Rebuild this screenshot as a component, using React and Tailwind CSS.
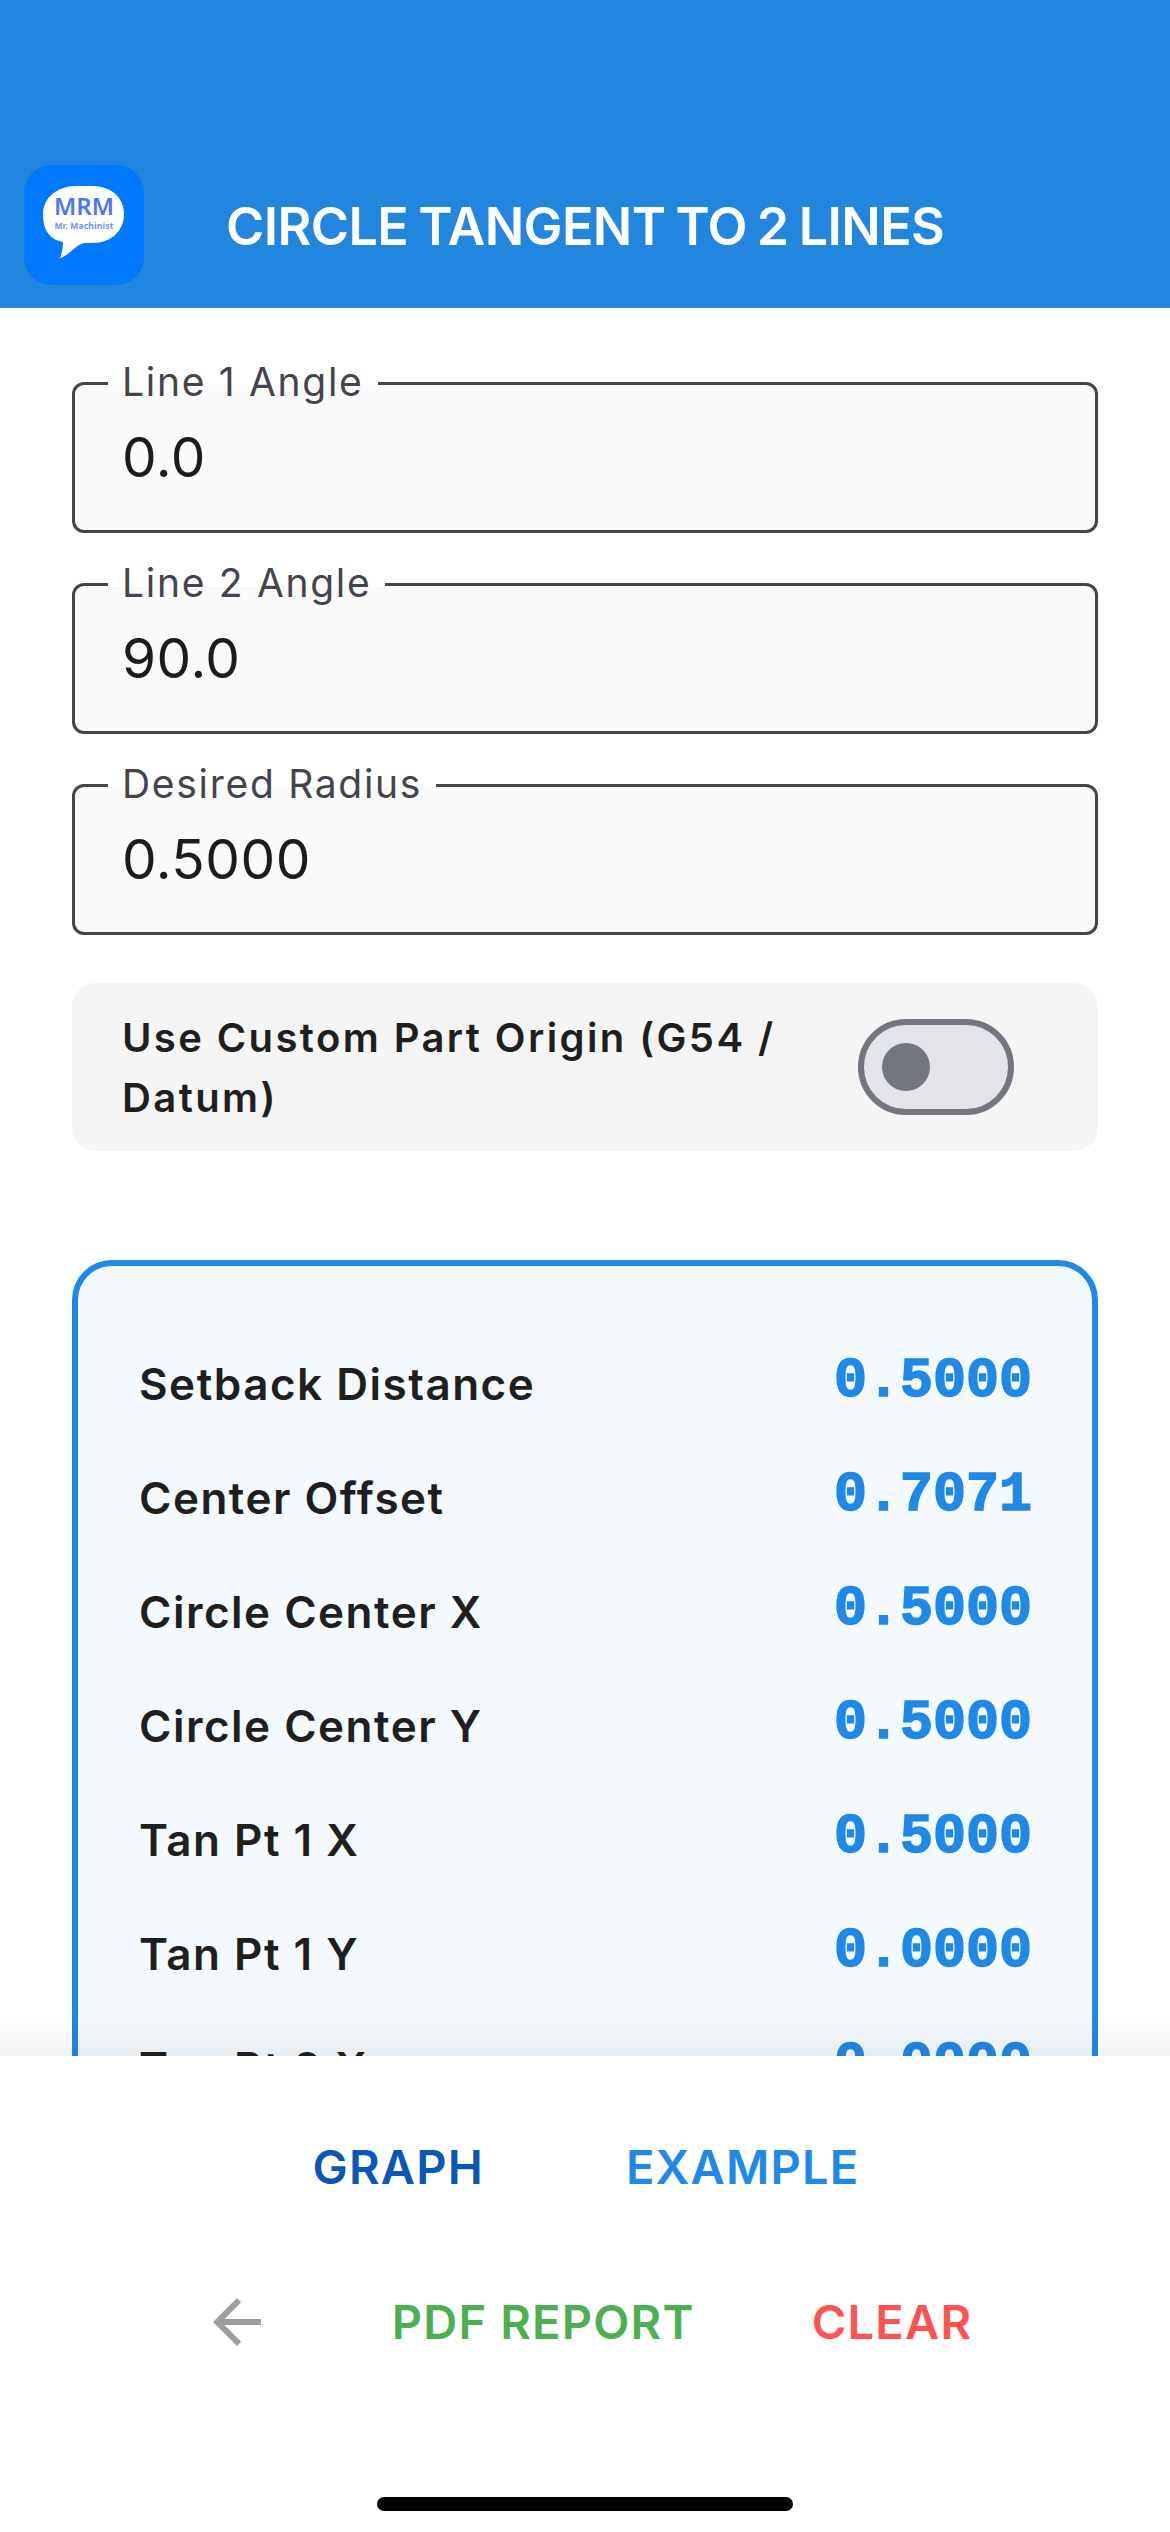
import { MdArrowBack } from 'react-icons/md';

const fields = [
  { label: 'Line 1 Angle', value: '0.0' },
  { label: 'Line 2 Angle', value: '90.0' },
  { label: 'Desired Radius', value: '0.5000' },
];

const results = [
  ['Setback Distance', '0.5000'],
  ['Center Offset', '0.7071'],
  ['Circle Center X', '0.5000'],
  ['Circle Center Y', '0.5000'],
  ['Tan Pt 1 X', '0.5000'],
  ['Tan Pt 1 Y', '0.0000'],
  ['Tan Pt 2 X', '0.0000'],
  ['Tan Pt 2 Y', '0.5000'],
];

function Logo() {
  return (
    <div className="h-[120px] w-[120px] shrink-0 rounded-[28px] bg-[#0078ff]">
      <svg viewBox="0 0 120 120" className="h-full w-full">
        <path d="M52 21h16c20 0 32 12 32 28 0 17-13 29-31 29h-8c-8 0-16 13-25 15 2-5 3-10 3-16C23 74 19 62 19 49c0-16 14-28 33-28z" fill="#fff" />
        <text x="60" y="50" textAnchor="middle" fontFamily="Noto Sans" fontWeight="600" fontSize="24" fill="#4a78f5">MRM</text>
        <text x="60" y="64" textAnchor="middle" fontFamily="Noto Sans" fontWeight="700" fontSize="8.5" letterSpacing="0.2" fill="#6f93f7">Mr. Machinist</text>
      </svg>
    </div>
  );
}

function Field({ label, value }) {
  return (
    <div className="relative h-[151px] rounded-[12px] border-[3px] border-[#44444c] bg-[#fafafa] pl-[47px] pt-[39px]">
      <span className="absolute left-[33px] top-[-25px] px-[14px] text-[39px] leading-[44px] tracking-[1.7px] text-[#44444c] [background:linear-gradient(#fff_25px,#fafafa_25px)]">{label}</span>
      <p className="text-[55px] leading-[66px] tracking-[0.5px] text-[#1c1c1e]">{value}</p>
    </div>
  );
}

export default function App() {
  return (
    <div className="flex h-[2532px] w-[1170px] flex-col overflow-hidden bg-white font-['Inter',sans-serif]">
      <header className="flex h-[308px] shrink-0 items-end bg-[#2285de] pb-[23px] pl-[24px]">
        <Logo />
        <h1 className="mb-[25px] ml-[82px] text-[52px] font-semibold leading-[66px] tracking-[-0.6px] text-white [word-spacing:-2.5px]">CIRCLE TANGENT TO 2 LINES</h1>
      </header>

      <main className="relative h-[1748px] shrink-0 overflow-hidden px-[72px] pt-[74px]">
        <div className="flex flex-col gap-[50px]">
          {fields.map((f) => <Field key={f.label} {...f} />)}
        </div>

        <div className="mt-[48px] flex h-[168px] items-center justify-between rounded-[24px] bg-[#f5f5f5] pl-[50px] pr-[84px]">
          <p className="w-[700px] pt-[2px] text-[40px] font-semibold leading-[60px] tracking-[2.4px] text-[#1f1f1f]">Use Custom Part Origin (G54 / Datum)</p>
          <div className="flex h-[96px] w-[156px] shrink-0 items-center rounded-full border-[6px] border-[#73757f] bg-[#e3e4e9] pl-[18px]">
            <span className="h-[48px] w-[48px] rounded-full bg-[#73757f]" />
          </div>
        </div>

        <section className="mt-[109px] h-[1100px] rounded-[40px] border-[6px] border-[#2088e6] bg-[#f4f9fd] pl-[61px] pr-[60px] pt-[46px]">
          {results.map(([label, value]) => (
            <div key={label} className="flex h-[114px] items-start justify-between">
              <span className="mt-[44px] text-[44px] font-semibold leading-[56px] tracking-[1.5px] text-[#1f1f1f]">{label}</span>
              <span className="mt-[40px] font-['Liberation_Mono',monospace] text-[55px] font-bold leading-[60px] text-[#2088e6] [-webkit-text-stroke:1.5px_#2088e6]">{value}</span>
            </div>
          ))}
        </section>

        {/* footer shadow */}
        <div className="pointer-events-none absolute inset-x-0 bottom-0 h-[42px] bg-gradient-to-b from-transparent to-black/5" />
      </main>

      <footer className="flex flex-1 flex-col items-center">
        <div className="mt-[86px] flex h-[50px] items-center gap-[142px] pl-[2px] text-[47px] font-semibold tracking-[1.2px]">
          <span className="text-[#0a57b5]">GRAPH</span>
          <span className="text-[#2088e6]">EXAMPLE</span>
        </div>
        <div className="mt-[105px] flex h-[50px] items-center pl-[3px] text-[47px] font-semibold tracking-[1.2px]">
          <MdArrowBack size={72} className="text-[#9e9e9e]" />
          <span className="ml-[119px] text-[#4caf50]">PDF REPORT</span>
          <span className="ml-[117px] text-[#ff5252]">CLEAR</span>
        </div>
        <div className="mt-[150px] h-[14px] w-[416px] rounded-full bg-black" />
      </footer>
    </div>
  );
}
